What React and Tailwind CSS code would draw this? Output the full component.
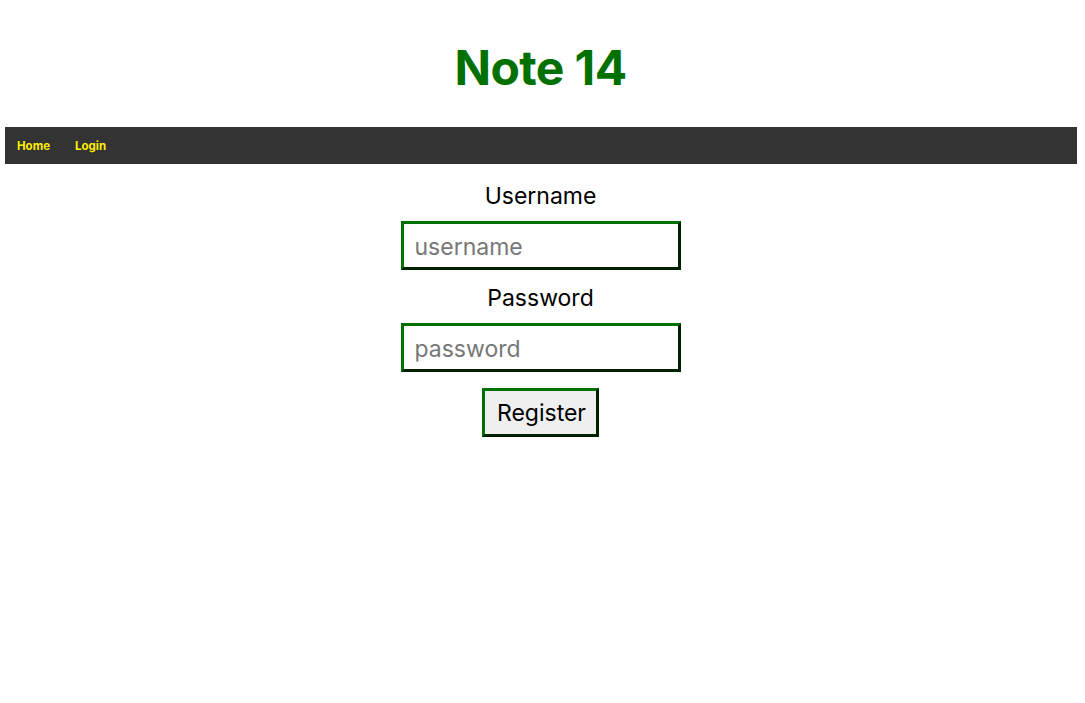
export default function App() {
  return (
    <div className="min-h-screen bg-white font-['Inter','Liberation_Sans',sans-serif] text-black">
      <h1 className="pt-[40px] pb-[31px] pr-[4px] text-center text-[48px] leading-[56px] font-bold tracking-[-0.6px] text-[#007000]">
        Note 14
      </h1>

      <nav className="ml-[5px] mr-[8px] flex h-[37px] items-center gap-[25px] bg-[#333333] px-[12px] pt-[3px]">
        <a className="text-[11.5px] font-bold text-[#ffee00]">Home</a>
        <a className="text-[11.5px] font-bold text-[#ffee00]">Login</a>
      </nav>

      <form className="flex flex-col items-center pt-[17px] pr-[4px]">
        <label className="text-[23px] leading-[30px]">Username</label>
        <input
          type="text"
          placeholder="username"
          className="mt-[10px] h-[49px] w-[280px] border-[3px] border-t-[#007000] border-l-[#007000] border-b-[#002000] border-r-[#002000] px-[11px] pt-[2px] text-[23px] outline-none placeholder:text-[#777777]"
        />
        <label className="mt-[13px] text-[23px] leading-[30px]">Password</label>
        <input
          type="password"
          placeholder="password"
          className="mt-[10px] h-[49px] w-[280px] border-[3px] border-t-[#007000] border-l-[#007000] border-b-[#002000] border-r-[#002000] px-[11px] pt-[2px] text-[23px] outline-none placeholder:text-[#777777]"
        />
        <button
          type="button"
          className="mt-[16px] h-[49px] border-[3px] border-t-[#007000] border-l-[#007000] border-b-[#002000] border-r-[#002000] bg-[#efefef] pl-[12px] pr-[10px] pt-[2px] text-[23px]"
        >
          Register
        </button>
      </form>
    </div>
  )
}
